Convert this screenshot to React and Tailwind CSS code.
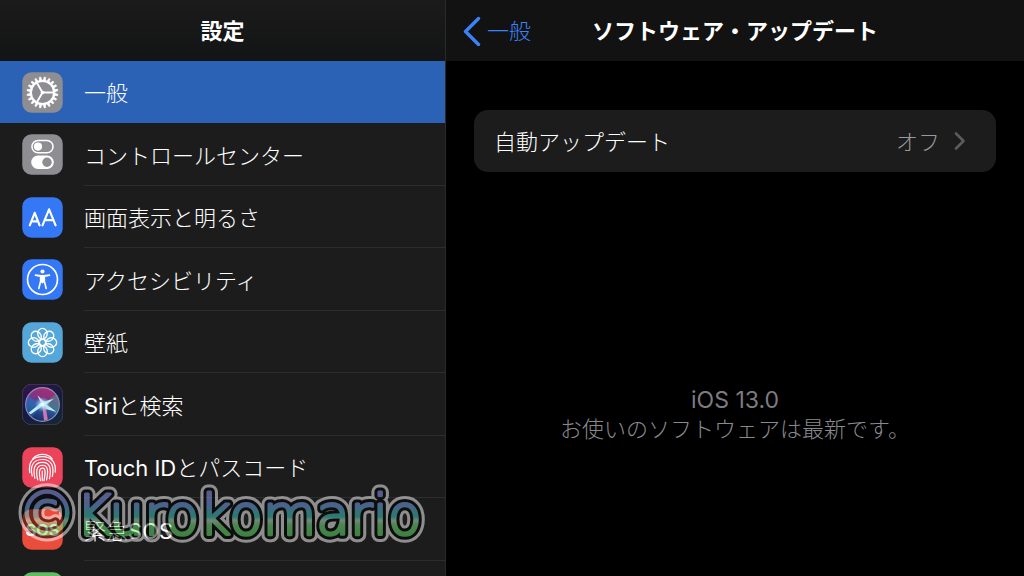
const tile = "size-[41px] shrink-0";

function Tile({ fill, edge = "none", children }) {
  return (
    <svg viewBox="0 0 40 40" className={tile} aria-hidden="true">
      <rect x="0.25" y="0.25" width="39.5" height="39.5" rx="9" fill={fill} stroke={edge} strokeWidth="0.8" />
      {children}
    </svg>
  );
}

function GearIcon() {
  const teeth = Array.from({ length: 20 }, (_, i) => i * 18 + 9);
  return (
    <Tile fill="#8e8d92">
      <g stroke="#fff" fill="none">
        <circle cx="20" cy="20" r="11.4" strokeWidth="2.2" />
        {teeth.map((a) => (
          <path key={a} d="M18.9 8.4 L19.3 4.9 H20.7 L21.1 8.4 Z" fill="#fff" strokeWidth="0.6" transform={`rotate(${a} 20 20)`} />
        ))}
        <path d="M20 20 H31 M20 20 L14.5 10.5 M20 20 L14.5 29.5" strokeWidth="1.8" />
        <circle cx="20" cy="20" r="1.5" fill="#fff" strokeWidth="0.5" />
      </g>
    </Tile>
  );
}

function TogglesIcon() {
  return (
    <Tile fill="#8e8d92">
      <rect x="9.7" y="6.3" width="20.6" height="12" rx="6" fill="none" stroke="#fff" strokeWidth="1.5" />
      <circle cx="15.6" cy="12.3" r="4" fill="#fff" />
      <rect x="9" y="21" width="22" height="13.2" rx="6.6" fill="#fff" />
      <circle cx="24.4" cy="27.6" r="4.6" fill="#8e8d92" />
    </Tile>
  );
}

function TextSizeIcon() {
  return (
    <Tile fill="#3478f6">
      <g fill="none" stroke="#fff" strokeWidth="2.1" strokeLinecap="round" strokeLinejoin="round">
        <path d="M7.6 27.6 L12.4 15.4 L17.2 27.6 M9.2 23.8 H15.6" />
        <path d="M20 27.6 L26.4 12 L32.8 27.6 M22 22.6 H30.8" />
      </g>
    </Tile>
  );
}

function AccessibilityIcon() {
  return (
    <Tile fill="#3478f6">
      <circle cx="20" cy="20" r="14.6" fill="none" stroke="#fff" strokeWidth="1.6" />
      <circle cx="20" cy="12.2" r="2" fill="#fff" />
      <path d="M13.2 15.7 Q20 17.3 26.8 15.7" fill="none" stroke="#fff" strokeWidth="1.6" strokeLinecap="round" />
      <path d="M18.2 16.5 H21.8 V21.6 L23.6 28.8 M18.2 16.5 V21.6 L16.4 28.8" fill="none" stroke="#fff" strokeWidth="1.6" strokeLinecap="round" strokeLinejoin="round" />
      <path d="M18 16 H22 V22.5 L20 24 L18 22.5Z" fill="#fff" />
    </Tile>
  );
}

function FlowerIcon() {
  return (
    <Tile fill="#55a6d9">
      <g fill="none" stroke="#fff" strokeWidth="1.3">
        {[0, 45, 90, 135, 180, 225, 270, 315].map((a) => (
          <ellipse key={a} cx="20" cy="11.4" rx="4.6" ry="5.2" transform={`rotate(${a} 20 20)`} />
        ))}
        <circle cx="20" cy="20" r="3" />
      </g>
    </Tile>
  );
}

function SiriIcon() {
  return (
    <Tile fill="url(#siriBack)" edge="#45435a">
      <defs>
        <linearGradient id="siriBack" x1="0" y1="0" x2="0.6" y2="1">
          <stop offset="0" stopColor="#35124c" />
          <stop offset="0.6" stopColor="#151b42" />
          <stop offset="1" stopColor="#12263c" />
        </linearGradient>
        <linearGradient id="siriOrb" x1="0.65" y1="0" x2="0.35" y2="1">
          <stop offset="0" stopColor="#b02c6c" />
          <stop offset="0.35" stopColor="#7b3588" />
          <stop offset="0.6" stopColor="#2c559f" />
          <stop offset="1" stopColor="#172b65" />
        </linearGradient>
        <radialGradient id="siriGlow">
          <stop offset="0" stopColor="#fff" />
          <stop offset="0.3" stopColor="#c8f4ff" stopOpacity="0.8" />
          <stop offset="1" stopColor="#67bfe0" stopOpacity="0" />
        </radialGradient>
      </defs>
      <circle cx="20" cy="20" r="16.4" fill="url(#siriOrb)" stroke="#8f8bb4" strokeWidth="1.2" />
      <path d="M20 20 L33 10 A16 16 0 0 1 33 29Z" fill="#39a28f" opacity="0.5" />
      <path d="M20 20 L6 12 A16 16 0 0 0 10 32Z" fill="#2b78c3" opacity="0.45" />
      <path d="M20 17 L6.5 28 L8.5 29.5 L18 23 L20 21 L23 24.5 L33.5 27 L24 20 L31 14.5 L21.5 17 L15 11 L18 17.5Z" fill="#d8f8fa" opacity="0.9" />
      <path d="M19.8 21 L21.5 35.8 L25.2 34.6 L22.8 21Z" fill="#f080b5" opacity="0.85" />
      <circle cx="20" cy="20" r="7.5" fill="url(#siriGlow)" />
    </Tile>
  );
}

function FingerprintIcon() {
  return (
    <Tile fill="#eb445a">
      <g fill="none" stroke="#fff" strokeWidth="1.2" strokeLinecap="round">
        <path d="M10.5 11.5 C15 5.8 25 5.8 29.5 11.5" />
        <path d="M7.6 25 C5.8 12.5 12 9.4 20 9.4 C29 9.4 33.5 15.5 32.4 24.5" />
        <path d="M10 28.5 C8.4 22 8.2 12.2 20 12.2 C30 12.2 31.3 20.5 29.6 28.6" />
        <path d="M12.6 30.5 C10.8 23 11 15 20 15 C28 15 28.6 22 26.8 30.8" />
        <path d="M15.3 32 C13.4 24 14 17.8 20 17.8 C26 17.8 25.5 24.5 24 32" />
        <path d="M18 32.8 C16.6 26 16.2 20.6 20 20.6 C23.4 20.6 22.8 26 21.4 32.8" />
        <path d="M19.8 23.6 C19.6 27 20 29 19.8 32.8" />
      </g>
    </Tile>
  );
}

function SosIcon() {
  return (
    <Tile fill="#eb4d3d">
      <text x="20" y="26" textAnchor="middle" className="font-['Inter','Liberation_Sans',sans-serif] text-[16px] font-bold" fill="#fff">
        SOS
      </text>
    </Tile>
  );
}

function ExposureIcon() {
  return <Tile fill="#62ba63" />;
}

const items = [
  { label: "一般", Icon: GearIcon },
  { label: "コントロールセンター", Icon: TogglesIcon },
  { label: "画面表示と明るさ", Icon: TextSizeIcon },
  { label: "アクセシビリティ", Icon: AccessibilityIcon },
  { label: "壁紙", Icon: FlowerIcon },
  { latin: "Siri", label: "と検索", Icon: SiriIcon },
  { latin: "Touch ID", label: "とパスコード", Icon: FingerprintIcon },
  { label: "緊急", tail: "SOS", Icon: SosIcon },
  { label: "", Icon: ExposureIcon },
];

function Watermark() {
  return (
    <svg
      viewBox="0 0 424 72"
      className="pointer-events-none absolute bottom-6 left-4 w-[424px] opacity-50"
      role="img"
      aria-label="©Kurokomario"
    >
      <defs>
        <linearGradient id="ink" gradientUnits="userSpaceOnUse" x1="0" y1="10" x2="0" y2="56">
          <stop offset="0" stopColor="#9698ff" />
          <stop offset="0.3" stopColor="#7da4ff" />
          <stop offset="0.58" stopColor="#38d8c4" />
          <stop offset="0.66" stopColor="#c8f0d8" />
          <stop offset="0.76" stopColor="#7cec84" />
          <stop offset="1" stopColor="#5ee866" />
        </linearGradient>
        <text
          id="word"
          x="2"
          y="54"
          strokeLinejoin="round"
          className="font-['DejaVu_Sans','Liberation_Sans',sans-serif] text-[55px]"
        >
          <tspan className="text-[58px]">©</tspan>Kurokomario
        </text>
      </defs>
      <use href="#word" fill="none" stroke="#fff" strokeWidth="15" />
      <use href="#word" fill="none" stroke="#000" strokeWidth="9" />
      <use href="#word" fill="url(#ink)" stroke="url(#ink)" strokeWidth="3" />
    </svg>
  );
}

export default function App() {
  return (
    <div className="relative flex h-screen overflow-hidden bg-black font-['Inter','Noto_Sans_CJK_JP',sans-serif] text-[22px] font-light text-white">
      <aside className="flex w-[446px] shrink-0 flex-col border-r border-[#2a2a2b] bg-[#1c1c1c]">
        <header className="flex h-[61px] shrink-0 items-center justify-center bg-linear-to-b from-[#1b1b1b] to-[#131415]">
          <h1 className="pt-0.5 font-bold">設定</h1>
        </header>
        <nav aria-label="設定">
          <ul>
            {items.map(({ latin, label, tail, Icon }, i) => (
              <li key={label} className="odd:h-[62px] even:h-[63px]">
                <a
                  href="#"
                  aria-current={i === 0 ? "page" : undefined}
                  aria-label={label ? undefined : "接触通知"}
                  className="group flex h-full items-center gap-[21px] pl-[22px] aria-[current=page]:bg-[#2c62b5]"
                >
                  <Icon />
                  <span className="flex h-full flex-1 items-center border-b border-[#2d2d2e] pt-1 group-aria-[current=page]:border-transparent">
                    <span>
                      {latin && <span className="font-normal">{latin}</span>}
                      {label}
                      {tail && <span className="font-normal">{tail}</span>}
                    </span>
                  </span>
                </a>
              </li>
            ))}
          </ul>
        </nav>
      </aside>

      <main className="flex min-w-0 flex-1 flex-col">
        <header className="grid h-[61px] shrink-0 grid-cols-[1fr_auto_1fr] items-center bg-[#121212] px-4">
          <a href="#" className="flex items-center gap-[5px] text-[#3b82f6]">
            <svg viewBox="0 0 20 30" className="h-[30px] w-5" fill="none" stroke="currentColor" strokeWidth="3.4" strokeLinecap="round" strokeLinejoin="round" aria-hidden="true">
              <path d="M16.5 2.5 L3.5 15.5 L16.5 28.5" />
            </svg>
            <span className="pt-0.5">一般</span>
          </a>
          <h2 className="pt-0.5 font-bold">ソフトウェア・アップデート</h2>
        </header>

        <section className="flex flex-1 flex-col px-7 pt-[49px]">
          <button type="button" className="flex h-[62px] items-center rounded-[14px] bg-[#1c1c1c] pr-[30px] pl-5 text-left">
            <span className="flex-1 pt-0.5">自動アップデート</span>
            <span className="pt-0.5 text-[#98989d]">オフ</span>
            <svg viewBox="0 0 12 20" className="ml-3.5 h-5 w-3" fill="none" stroke="#5b5b5f" strokeWidth="2.6" strokeLinecap="round" strokeLinejoin="round" aria-hidden="true">
              <path d="M2 2.5 L9.5 10 L2 17.5" />
            </svg>
          </button>
          <div className="mt-[214px] text-center leading-[29px] text-[#8a8a8e]">
            <p className="text-[23px] font-normal text-[#7c7c80]">iOS 13.0</p>
            <p>お使いのソフトウェアは最新です。</p>
          </div>
        </section>
      </main>

      <Watermark />
    </div>
  );
}
